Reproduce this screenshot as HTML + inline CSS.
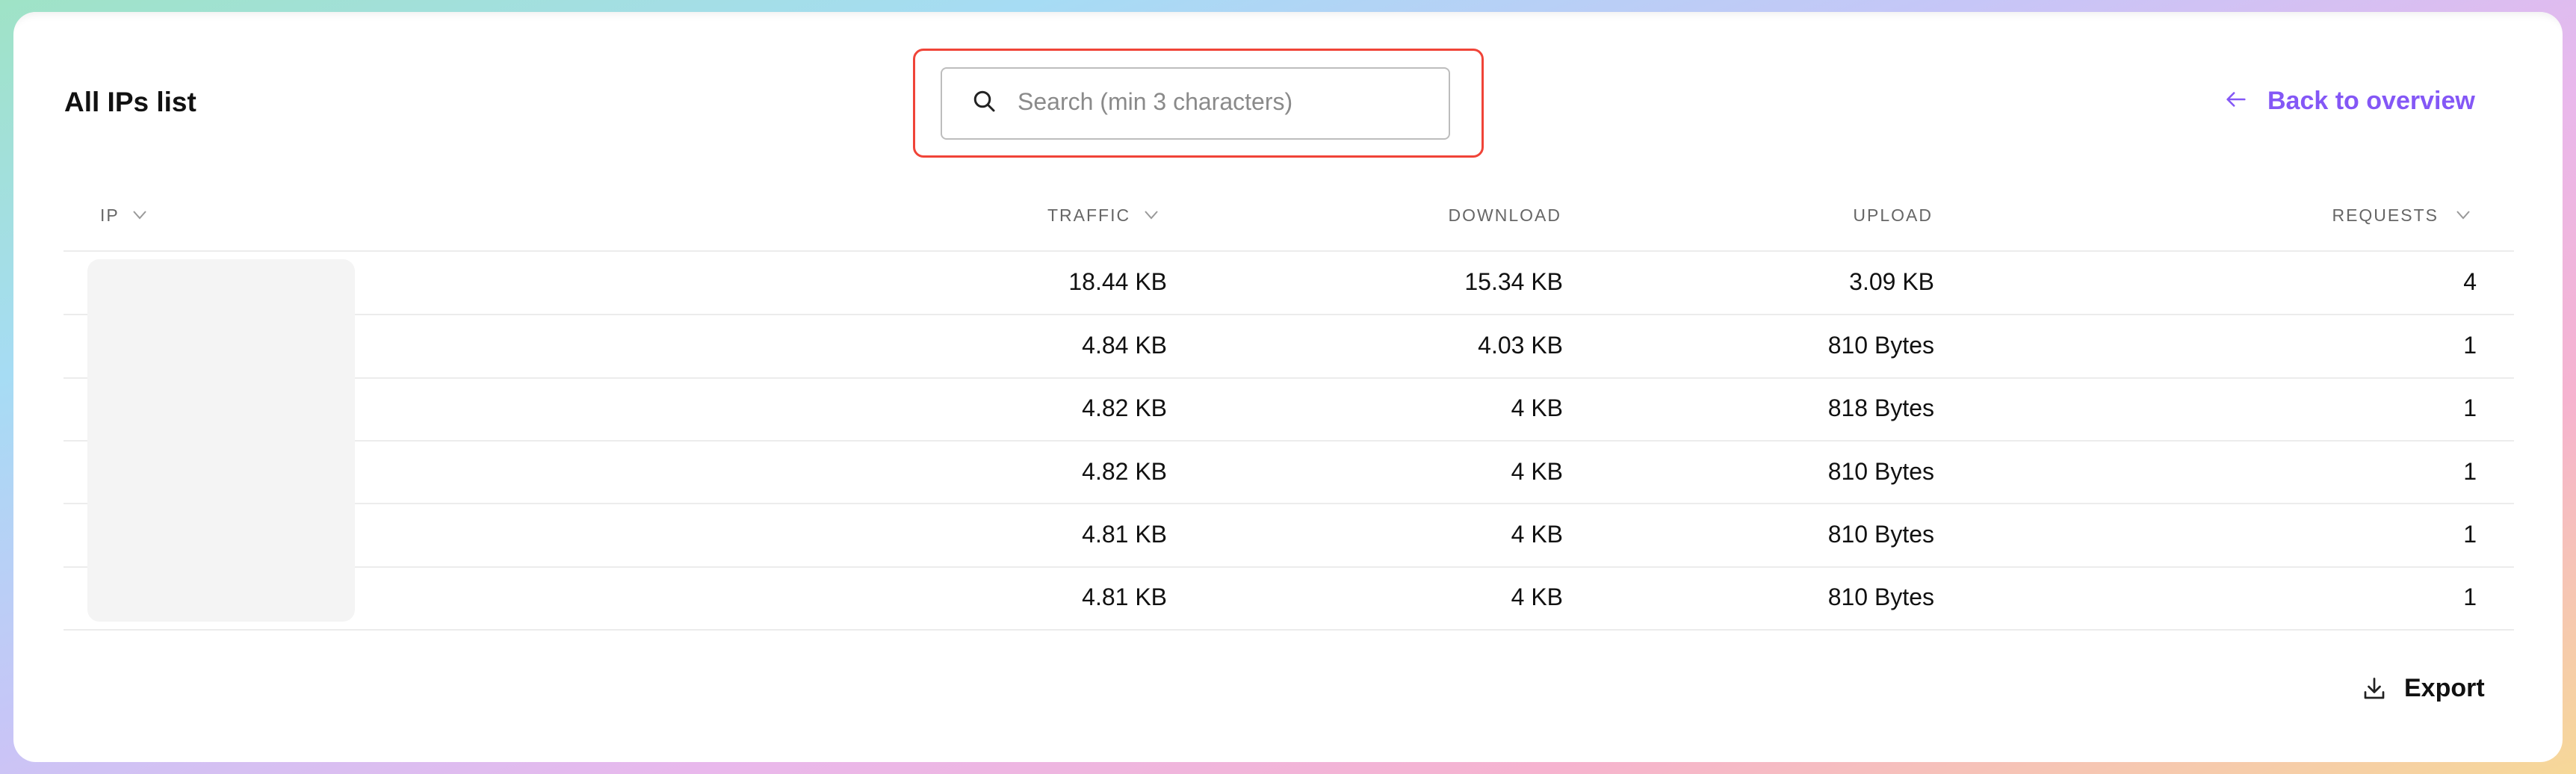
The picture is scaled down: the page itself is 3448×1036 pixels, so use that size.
<!DOCTYPE html>
<html><head><meta charset="utf-8"><style>
html,body{margin:0;padding:0;}
body{width:3448px;height:1036px;position:relative;overflow:hidden;font-family:"Liberation Sans",sans-serif;
background:linear-gradient(160deg,#9fe3c6 0%,#a6dcf4 22%,#c6c6f7 42%,#e9b8ec 60%,#f6b3cf 78%,#f6d898 100%);border-radius:40px;}
.card{position:absolute;left:18px;top:16px;right:18px;bottom:16px;background:#fff;border-radius:30px;box-shadow:inset 0 14px 10px -10px #f1f1f1;}
.abs{position:absolute;}
.title{left:86px;top:116px;font-size:37px;font-weight:bold;color:#111;}
.red{left:1222px;top:65px;width:758px;height:140px;border:3px solid #f04438;border-radius:14px;}
.inp{left:1259px;top:90px;width:678px;height:93px;border:2px solid #bdbdbd;border-radius:8px;}
.ph{left:1362px;top:118px;font-size:32px;color:#8a8a8a;}
.back{left:3035px;top:116px;font-size:34px;font-weight:bold;color:#8457f6;}
.hd{top:275px;font-size:23px;letter-spacing:2px;color:#666;}
.line{left:85px;width:3280px;height:2px;background:#ececec;}
.v{font-size:32px;color:#111;text-align:right;width:400px;}
.blur{left:117px;top:347px;width:358px;height:485px;background:#f4f4f4;border-radius:16px;}
.exp{left:3218px;top:902px;font-size:34px;font-weight:bold;color:#111;}
</style></head><body>
<div class="card"></div>
<div class="abs title">All IPs list</div>
<div class="abs red"></div>
<div class="abs inp"></div>
<svg class="abs" style="left:1300px;top:118px" width="36" height="36" viewBox="0 0 24 24" fill="none" stroke="#222" stroke-width="2" stroke-linecap="round"><circle cx="10" cy="10" r="6.5"/><path d="M15 15l5 5"/></svg>
<div class="abs ph">Search (min 3 characters)</div>
<svg class="abs" style="left:2976px;top:116px" width="34" height="34" viewBox="0 0 24 24" fill="none" stroke="#8457f6" stroke-width="1.8" stroke-linecap="round" stroke-linejoin="round"><path d="M20 12H4M10 6l-6 6 6 6"/></svg>
<div class="abs back">Back to overview</div>

<div class="abs hd" style="left:134px">IP</div>
<svg class="abs" style="left:176px;top:280px" width="22" height="16" viewBox="0 0 22 16" fill="none" stroke="#999" stroke-width="2"><path d="M3 3l8 9 8-9"/></svg>
<div class="abs hd" style="left:1402px">TRAFFIC</div>
<svg class="abs" style="left:1530px;top:280px" width="22" height="16" viewBox="0 0 22 16" fill="none" stroke="#999" stroke-width="2"><path d="M3 3l8 9 8-9"/></svg>
<div class="abs hd" style="left:1690px;width:400px;text-align:right">DOWNLOAD</div>
<div class="abs hd" style="left:2187px;width:400px;text-align:right">UPLOAD</div>
<div class="abs hd" style="left:2864px;width:400px;text-align:right">REQUESTS</div>
<svg class="abs" style="left:3286px;top:280px" width="22" height="16" viewBox="0 0 22 16" fill="none" stroke="#999" stroke-width="2"><path d="M3 3l8 9 8-9"/></svg>

<div class="abs line" style="top:335px"></div>
<div class="abs line" style="top:420px"></div>
<div class="abs line" style="top:505px"></div>
<div class="abs line" style="top:589px"></div>
<div class="abs line" style="top:673px"></div>
<div class="abs line" style="top:758px"></div>
<div class="abs line" style="top:842px"></div>
<div class="abs blur"></div>

<div class="abs v" style="left:1162px;top:359px">18.44 KB</div>
<div class="abs v" style="left:1692px;top:359px">15.34 KB</div>
<div class="abs v" style="left:2189px;top:359px">3.09 KB</div>
<div class="abs v" style="left:2915px;top:359px">4</div>

<div class="abs v" style="left:1162px;top:444px">4.84 KB</div>
<div class="abs v" style="left:1692px;top:444px">4.03 KB</div>
<div class="abs v" style="left:2189px;top:444px">810 Bytes</div>
<div class="abs v" style="left:2915px;top:444px">1</div>

<div class="abs v" style="left:1162px;top:528px">4.82 KB</div>
<div class="abs v" style="left:1692px;top:528px">4 KB</div>
<div class="abs v" style="left:2189px;top:528px">818 Bytes</div>
<div class="abs v" style="left:2915px;top:528px">1</div>

<div class="abs v" style="left:1162px;top:613px">4.82 KB</div>
<div class="abs v" style="left:1692px;top:613px">4 KB</div>
<div class="abs v" style="left:2189px;top:613px">810 Bytes</div>
<div class="abs v" style="left:2915px;top:613px">1</div>

<div class="abs v" style="left:1162px;top:697px">4.81 KB</div>
<div class="abs v" style="left:1692px;top:697px">4 KB</div>
<div class="abs v" style="left:2189px;top:697px">810 Bytes</div>
<div class="abs v" style="left:2915px;top:697px">1</div>

<div class="abs v" style="left:1162px;top:781px">4.81 KB</div>
<div class="abs v" style="left:1692px;top:781px">4 KB</div>
<div class="abs v" style="left:2189px;top:781px">810 Bytes</div>
<div class="abs v" style="left:2915px;top:781px">1</div>

<svg class="abs" style="left:3160px;top:904px" width="36" height="36" viewBox="0 0 24 24" fill="none" stroke="#222" stroke-width="1.8" stroke-linecap="round" stroke-linejoin="round"><path d="M12 3v12M7 10l5 5 5-5M4 15v5h16v-5"/></svg>
<div class="abs exp">Export</div>
</body></html>
